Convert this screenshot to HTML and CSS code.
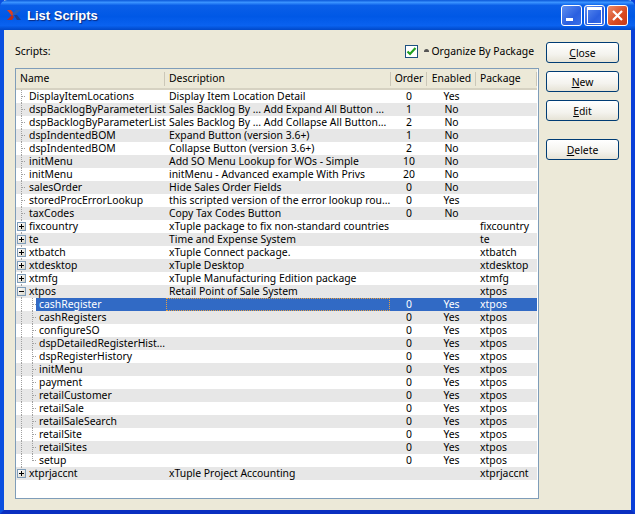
FILE: index.html
```html
<!DOCTYPE html>
<html lang="en">
<head>
  <meta charset="UTF-8">
  <title>List Scripts</title>
  <link rel="stylesheet" href="styles.css">
</head>
<body>
  <div class="window">
    <div class="titlebar">
      <svg class="app-icon" width="16" height="16" viewBox="0 0 16 16">
        <path d="M1 3h4l3 4 -2 2z" fill="#e0401c"/>
        <path d="M1 13l5 -5 2 2 -2 3z" fill="#c02a18"/>
        <path d="M6 7l4 -4h5l-6 5z" fill="#2a5fb8"/>
        <path d="M8 8l3 0 4 5h-4z" fill="#1c3f90"/>
      </svg>
      <span class="title">List Scripts</span>
      <div class="caption-btns">
        <span class="caption-btn min"></span>
        <span class="caption-btn max"></span>
        <span class="caption-btn close">
          <svg width="13" height="13" viewBox="0 0 13 13"><path d="M2 2l9 9M11 2l-9 9" stroke="#fff" stroke-width="2.2"/></svg>
        </span>
      </div>
    </div>

    <div class="content">
      <div class="main">
        <div class="toolbar">
          <span>Scripts:</span>
          <label class="organize">
            <span class="checkbox">
              <svg width="11" height="11" viewBox="0 0 11 11"><path d="M1.5 5.5l2.5 2.5 5.5 -6" fill="none" stroke="#21a121" stroke-width="2.2"/></svg>
            </span>
            <span class="sort-mark"></span>
            <span>Organize By Package</span>
          </label>
        </div>

        <div class="list">
          <table>
            <colgroup>
              <col class="col-name"><col class="col-desc"><col class="col-order"><col class="col-enabled"><col class="col-pkg">
            </colgroup>
            <thead>
              <tr><th>Name</th><th>Description</th><th class="center">Order</th><th class="center">Enabled</th><th>Package</th></tr>
            </thead>
            <tbody>
              <tr><td><div class="tree"><span class="branch leaf"></span><span class="label">DisplayItemLocations</span></div></td><td>Display Item Location Detail</td><td class="center">0</td><td class="center">Yes</td><td></td></tr>
              <tr><td><div class="tree"><span class="branch leaf"></span><span class="label">dspBacklogByParameterList</span></div></td><td>Sales Backlog By ... Add Expand All Button ...</td><td class="center">1</td><td class="center">No</td><td></td></tr>
              <tr><td><div class="tree"><span class="branch leaf"></span><span class="label">dspBacklogByParameterList</span></div></td><td>Sales Backlog By ... Add Collapse All Button...</td><td class="center">2</td><td class="center">No</td><td></td></tr>
              <tr><td><div class="tree"><span class="branch leaf"></span><span class="label">dspIndentedBOM</span></div></td><td>Expand Button (version 3.6+)</td><td class="center">1</td><td class="center">No</td><td></td></tr>
              <tr><td><div class="tree"><span class="branch leaf"></span><span class="label">dspIndentedBOM</span></div></td><td>Collapse Button (version 3.6+)</td><td class="center">2</td><td class="center">No</td><td></td></tr>
              <tr><td><div class="tree"><span class="branch leaf"></span><span class="label">initMenu</span></div></td><td>Add SO Menu Lookup for WOs - Simple</td><td class="center">10</td><td class="center">No</td><td></td></tr>
              <tr><td><div class="tree"><span class="branch leaf"></span><span class="label">initMenu</span></div></td><td>initMenu - Advanced example With Privs</td><td class="center">20</td><td class="center">No</td><td></td></tr>
              <tr><td><div class="tree"><span class="branch leaf"></span><span class="label">salesOrder</span></div></td><td>Hide Sales Order Fields</td><td class="center">0</td><td class="center">No</td><td></td></tr>
              <tr><td><div class="tree"><span class="branch leaf"></span><span class="label">storedProcErrorLookup</span></div></td><td>this scripted version of the error lookup rou...</td><td class="center">0</td><td class="center">Yes</td><td></td></tr>
              <tr><td><div class="tree"><span class="branch leaf"></span><span class="label">taxCodes</span></div></td><td>Copy Tax Codes Button</td><td class="center">0</td><td class="center">No</td><td></td></tr>
              <tr><td><div class="tree"><span class="branch"><i class="toggle plus"></i></span><span class="label">fixcountry</span></div></td><td>xTuple package to fix non-standard countries</td><td></td><td></td><td>fixcountry</td></tr>
              <tr><td><div class="tree"><span class="branch"><i class="toggle plus"></i></span><span class="label">te</span></div></td><td>Time and Expense System</td><td></td><td></td><td>te</td></tr>
              <tr><td><div class="tree"><span class="branch"><i class="toggle plus"></i></span><span class="label">xtbatch</span></div></td><td>xTuple Connect package.</td><td></td><td></td><td>xtbatch</td></tr>
              <tr><td><div class="tree"><span class="branch"><i class="toggle plus"></i></span><span class="label">xtdesktop</span></div></td><td>xTuple Desktop</td><td></td><td></td><td>xtdesktop</td></tr>
              <tr><td><div class="tree"><span class="branch"><i class="toggle plus"></i></span><span class="label">xtmfg</span></div></td><td>xTuple Manufacturing Edition package</td><td></td><td></td><td>xtmfg</td></tr>
              <tr><td><div class="tree"><span class="branch"><i class="toggle"></i></span><span class="label">xtpos</span></div></td><td>Retail Point of Sale System</td><td></td><td></td><td>xtpos</td></tr>
              <tr class="selected"><td><div class="tree"><span class="branch"></span><span class="branch leaf child"></span><span class="label">cashRegister</span></div></td><td><div class="focus"></div></td><td class="center">0</td><td class="center">Yes</td><td>xtpos</td></tr>
              <tr><td><div class="tree"><span class="branch"></span><span class="branch leaf child"></span><span class="label">cashRegisters</span></div></td><td></td><td class="center">0</td><td class="center">Yes</td><td>xtpos</td></tr>
              <tr><td><div class="tree"><span class="branch"></span><span class="branch leaf child"></span><span class="label">configureSO</span></div></td><td></td><td class="center">0</td><td class="center">Yes</td><td>xtpos</td></tr>
              <tr><td><div class="tree"><span class="branch"></span><span class="branch leaf child"></span><span class="label">dspDetailedRegisterHist...</span></div></td><td></td><td class="center">0</td><td class="center">Yes</td><td>xtpos</td></tr>
              <tr><td><div class="tree"><span class="branch"></span><span class="branch leaf child"></span><span class="label">dspRegisterHistory</span></div></td><td></td><td class="center">0</td><td class="center">Yes</td><td>xtpos</td></tr>
              <tr><td><div class="tree"><span class="branch"></span><span class="branch leaf child"></span><span class="label">initMenu</span></div></td><td></td><td class="center">0</td><td class="center">Yes</td><td>xtpos</td></tr>
              <tr><td><div class="tree"><span class="branch"></span><span class="branch leaf child"></span><span class="label">payment</span></div></td><td></td><td class="center">0</td><td class="center">Yes</td><td>xtpos</td></tr>
              <tr><td><div class="tree"><span class="branch"></span><span class="branch leaf child"></span><span class="label">retailCustomer</span></div></td><td></td><td class="center">0</td><td class="center">Yes</td><td>xtpos</td></tr>
              <tr><td><div class="tree"><span class="branch"></span><span class="branch leaf child"></span><span class="label">retailSale</span></div></td><td></td><td class="center">0</td><td class="center">Yes</td><td>xtpos</td></tr>
              <tr><td><div class="tree"><span class="branch"></span><span class="branch leaf child"></span><span class="label">retailSaleSearch</span></div></td><td></td><td class="center">0</td><td class="center">Yes</td><td>xtpos</td></tr>
              <tr><td><div class="tree"><span class="branch"></span><span class="branch leaf child"></span><span class="label">retailSite</span></div></td><td></td><td class="center">0</td><td class="center">Yes</td><td>xtpos</td></tr>
              <tr><td><div class="tree"><span class="branch"></span><span class="branch leaf child"></span><span class="label">retailSites</span></div></td><td></td><td class="center">0</td><td class="center">Yes</td><td>xtpos</td></tr>
              <tr><td><div class="tree"><span class="branch"></span><span class="branch leaf child last"></span><span class="label">setup</span></div></td><td></td><td class="center">0</td><td class="center">Yes</td><td>xtpos</td></tr>
              <tr><td><div class="tree"><span class="branch end"><i class="toggle plus"></i></span><span class="label">xtprjaccnt</span></div></td><td>xTuple Project Accounting</td><td></td><td></td><td>xtprjaccnt</td></tr>
            </tbody>
          </table>
        </div>
      </div>

      <div class="side">
        <button class="btn"><u>C</u>lose</button>
        <button class="btn"><u>N</u>ew</button>
        <button class="btn"><u>E</u>dit</button>
        <button class="btn spaced"><u>D</u>elete</button>
      </div>
    </div>
  </div>
</body>
</html>
```

FILE: styles.css
```css
* {
  box-sizing: border-box;
}

body {
  margin: 0;
  font-family: "Noto Sans", "DejaVu Sans", sans-serif;
  font-size: 10.4px;
  color: #000;
  background: #ece9d8;
}

.window {
  width: 635px;
  height: 514px;
  display: flex;
  flex-direction: column;
  background: #ece9d8;
  border: solid #0831d9;
  border-width: 0 4px 4px;
  border-left-color: #0a4fe0;
  border-right-color: #0a3fd8;
  border-bottom-color: #0a2fc0;
}

.titlebar {
  height: 30px;
  margin: 0 -4px;
  flex: none;
  display: flex;
  align-items: center;
  padding: 0 7px 0 6px;
  background: linear-gradient(180deg, #0a57d8 0%, #3a93ff 8%, #0a5fe8 18%, #0058e6 55%, #0a62f0 85%, #0048c8 100%);
  border-radius: 7px 7px 0 0;
}

.app-icon {
  flex: none;
}

.title {
  margin-left: 5px;
  font-family: "Liberation Sans", sans-serif;
  font-size: 13px;
  font-weight: bold;
  color: #fff;
  text-shadow: 1px 1px 1px #0a2a80;
}

.caption-btns {
  margin-left: auto;
  display: flex;
  gap: 2px;
}

.caption-btn {
  width: 21px;
  height: 21px;
  display: flex;
  align-items: center;
  justify-content: center;
  border: 1px solid #fff;
  border-radius: 3px;
  background: linear-gradient(135deg, #5f8ff0, #2a5fe0 60%, #3a70e8);
}

.caption-btn.close {
  background: linear-gradient(135deg, #eb8a68, #d84a20 60%, #c83a18);
}

.caption-btn.min::before {
  content: "";
  width: 7px;
  height: 3px;
  margin: 9px 5px 0 0;
  background: #fff;
}

.caption-btn.max::before {
  content: "";
  width: 13px;
  height: 13px;
  border: 1px solid #fff;
  border-top-width: 3px;
}

.content {
  flex: 1;
  display: flex;
  padding: 12px 12px 11px 11px;
  gap: 7px;
}

.main {
  width: 524px;
  display: flex;
  flex-direction: column;
}

.toolbar {
  height: 26px;
  display: flex;
  align-items: flex-start;
  justify-content: space-between;
  padding-top: 2px;
}

.organize {
  display: flex;
  align-items: center;
  margin-right: 5px;
}

.checkbox {
  width: 13px;
  height: 13px;
  display: flex;
  align-items: center;
  justify-content: center;
  border: 1px solid #1c5180;
  background: #fff;
}

.sort-mark {
  width: 5px;
  height: 3px;
  margin: 0 2px 2px 6px;
  background: #555;
  border-radius: 3px 3px 0 0;
}

.list {
  flex: 1;
  border: 1px solid #7f9db9;
  background: #fff;
}

table {
  width: 521px;
  table-layout: fixed;
  border-collapse: collapse;
}

.col-name { width: 149px; }
.col-desc { width: 226px; }
.col-order { width: 36px; }
.col-enabled { width: 49px; }
.col-pkg { width: 61px; }

th {
  height: 20px;
  padding: 0 0 2px 4px;
  font-weight: normal;
  text-align: left;
  background: #ece9d8;
  border-bottom: 2px solid #d6d2c2;
  background-image: linear-gradient(#cbc7b8, #cbc7b8);
  background-size: 1px 14px;
  background-position: right 3px;
  background-repeat: no-repeat;
}

th.center,
td.center {
  text-align: center;
  padding-left: 0;
}

td {
  height: 13px;
  padding: 0 0 0 4px;
  line-height: 13px;
  white-space: nowrap;
}

td:first-child {
  padding: 0;
}

tbody tr:nth-child(even) {
  background: #e7e7e7;
}

.tree {
  display: flex;
  height: 13px;
}

.label {
  flex: 1;
  padding-left: 3px;
}

.branch {
  flex: none;
  position: relative;
  width: 7px;
  height: 13px;
  margin-left: 3px;
  background: repeating-linear-gradient(180deg, #a0a0a0 0 1px, transparent 1px 2px) 2px 0 / 1px 13px no-repeat;
}

.branch.leaf {
  background:
    repeating-linear-gradient(180deg, #a0a0a0 0 1px, transparent 1px 2px) 2px 0 / 1px 13px no-repeat,
    repeating-linear-gradient(90deg, #a0a0a0 0 1px, transparent 1px 2px) 3px 6px / 4px 1px no-repeat;
}

.branch.child {
  margin-left: 0;
  width: 10px;
  background:
    repeating-linear-gradient(180deg, #a0a0a0 0 1px, transparent 1px 2px) 6px 0 / 1px 13px no-repeat,
    repeating-linear-gradient(90deg, #a0a0a0 0 1px, transparent 1px 2px) 7px 6px / 3px 1px no-repeat;
}

.branch.child.last {
  background:
    repeating-linear-gradient(180deg, #a0a0a0 0 1px, transparent 1px 2px) 6px 0 / 1px 7px no-repeat,
    repeating-linear-gradient(90deg, #a0a0a0 0 1px, transparent 1px 2px) 7px 6px / 3px 1px no-repeat;
}

.branch.end {
  background-size: 1px 3px;
}

/* expander box sits over the dotted line */
.toggle {
  position: absolute;
  left: -2px;
  top: 2px;
  width: 9px;
  height: 9px;
  border: 1px solid #7f9db9;
  background: linear-gradient(#000, #000) center / 5px 1px no-repeat, linear-gradient(135deg, #fff, #d8d4c8);
}

.toggle.plus {
  background:
    linear-gradient(#000, #000) center / 5px 1px no-repeat,
    linear-gradient(#000, #000) center / 1px 5px no-repeat,
    linear-gradient(135deg, #fff, #d8d4c8);
}

.selected td:not(:first-child),
.selected .label {
  background: #316ac5;
  color: #fff;
}

.selected td:nth-child(2) {
  padding: 0 1px 0 1px;
}

.focus {
  height: 13px;
  border: 1px dotted #e8a040;
}

.side {
  width: 73px;
  display: flex;
  flex-direction: column;
  gap: 8px;
}

.btn {
  height: 21px;
  padding: 0;
  font: inherit;
  color: #000;
  border: 1px solid #003c74;
  border-radius: 3px;
  background: linear-gradient(180deg, #fff 0%, #f4f3ee 60%, #e6e3d6 100%);
}

.btn.spaced {
  margin-top: 10px;
}
```
